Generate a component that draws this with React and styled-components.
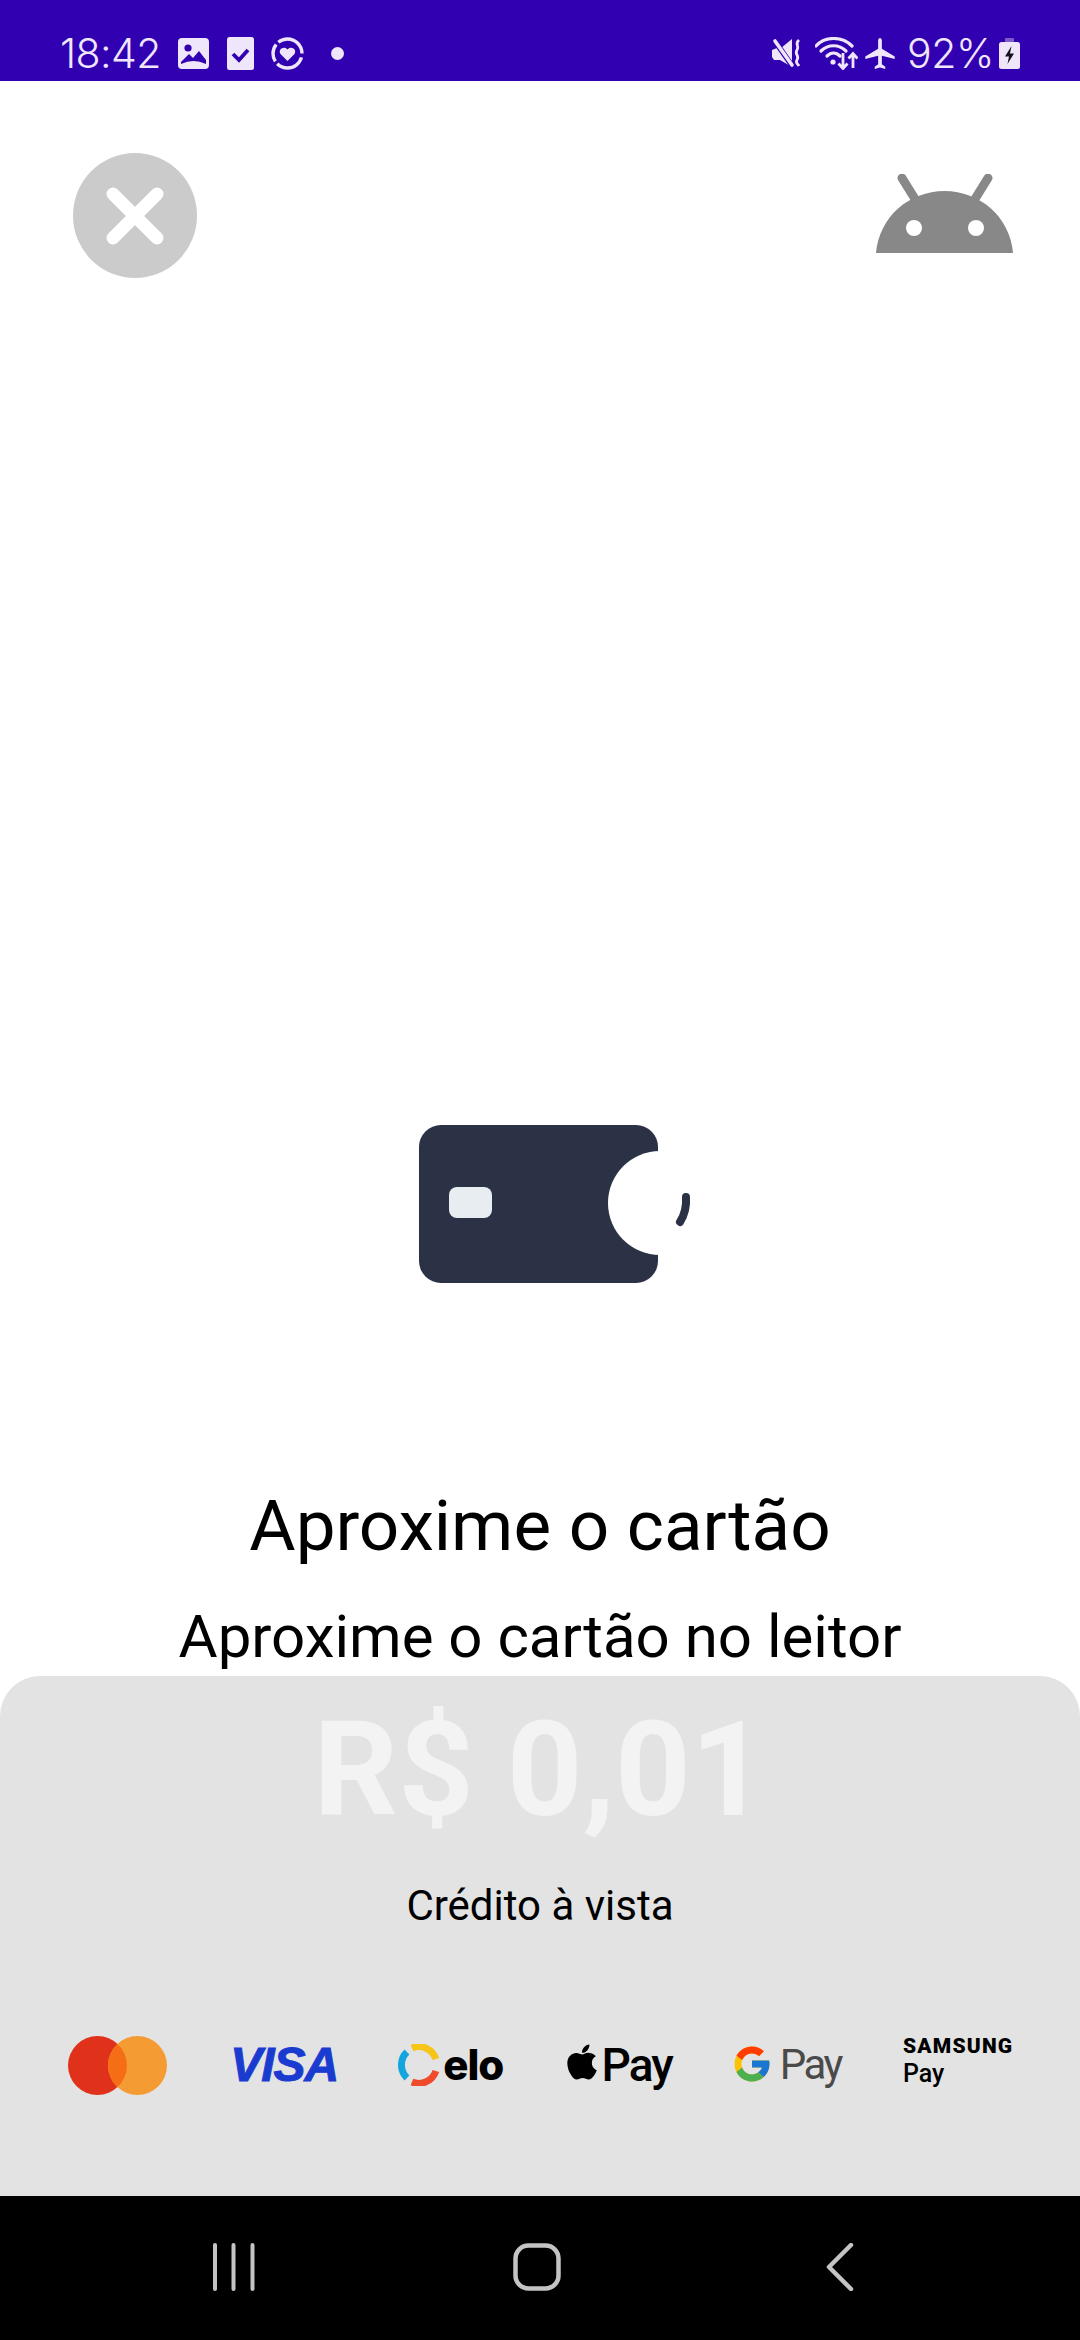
import React from "react";
import styled, { createGlobalStyle } from "styled-components";
import { FaApple } from "react-icons/fa";
import { FcGoogle } from "react-icons/fc";

const Global = createGlobalStyle`
  html, body { margin: 0; padding: 0; background: #fff; }
  * { box-sizing: border-box; }
  body { font-family: Roboto, "Liberation Sans", sans-serif; }
`;

const Page = styled.div`
  width: 1080px;
  height: 2340px;
  display: flex;
  flex-direction: column;
  overflow: hidden;
  background: #fff;
`;

const StatusBar = styled.div`
  height: 81px;
  flex: none;
  background: #3100b0;
  color: #efe6fb;
  display: flex;
  justify-content: space-between;
  align-items: flex-start;
  padding: 36px 60px 0 60px;
`;
const StatusGroup = styled.div`
  display: flex;
  align-items: center;
  height: 34px;
`;
const Clock = styled.span`
  font-family: Inter, Roboto, sans-serif;
  font-weight: 300;
  font-size: 41px;
  line-height: 34px;
  letter-spacing: -0.6px;
`;
const Percent = styled(Clock)`
  letter-spacing: -0.4px;
  margin: 0 5px 0 11px;
`;
const StatusIcon = styled.svg`
  display: block;
  flex: none;
  margin-left: ${(p) => p.$ml || 0}px;
`;

const Main = styled.main`
  flex: 1;
  display: flex;
  flex-direction: column;
  align-items: stretch;
`;
const Header = styled.header`
  display: flex;
  justify-content: space-between;
  align-items: flex-start;
  padding: 72px 67px 0 73px;
`;
const CloseButton = styled.button`
  width: 124px;
  height: 125px;
  border: 0;
  padding: 0;
  border-radius: 50%;
  background: #cbcbcb;
  display: flex;
  align-items: center;
  justify-content: center;
`;
const AndroidIcon = styled.svg`
  display: block;
  margin-top: 21px;
`;
const Illustration = styled.svg`
  display: block;
  align-self: center;
  margin-top: 846px;
`;
const Title = styled.h1`
  margin: 202px 0 0;
  text-align: center;
  font-weight: 400;
  font-size: 71px;
  line-height: 80px;
  color: #000;
`;
const Subtitle = styled.h2`
  margin: 37px 0 0;
  text-align: center;
  font-weight: 400;
  font-size: 60px;
  line-height: 68px;
  color: #000;
`;

const Panel = styled.section`
  height: 520px;
  flex: none;
  background: #e3e3e3;
  border-radius: 40px 40px 0 0;
  display: flex;
  flex-direction: column;
  align-items: center;
`;
const Amount = styled.div`
  margin-top: 17px;
  font-weight: 700;
  font-size: 132px;
  line-height: 155px;
  color: #f3f3f3;
`;
const Mode = styled.div`
  margin-top: 34px;
  font-size: 42px;
  line-height: 47px;
  color: #000;
`;
const Brands = styled.div`
  margin-top: 104px;
  width: 100%;
  display: flex;
  justify-content: space-between;
  align-items: center;
  padding: 0 71px 0 68px;
  height: 64px;
`;
const Logo = styled.div`
  width: ${(p) => p.$w}px;
  display: flex;
  align-items: center;
  flex: none;
`;
const VisaMark = styled.span`
  font-family: "Liberation Sans", sans-serif;
  font-style: italic;
  font-weight: 700;
  font-size: 48px;
  line-height: 48px;
  letter-spacing: -1px;
  color: #1a3bcf;
  -webkit-text-stroke: 1px #1a3bcf;
`;
const EloMark = styled.span`
  font-family: Inter, Roboto, sans-serif;
  font-weight: 800;
  font-size: 42px;
  line-height: 48px;
  letter-spacing: -1px;
  color: #000;
  margin-left: 3px;
`;
const PayMark = styled.span`
  font-weight: ${(p) => p.$weight || 500};
  font-size: ${(p) => p.$size || 46}px;
  line-height: 50px;
  letter-spacing: ${(p) => p.$spacing ?? -2}px;
  color: ${(p) => p.$color || "#000"};
  margin-left: ${(p) => p.$ml || 0}px;
`;
const AppleGlyph = styled(FaApple)`
  width: 30px;
  height: 40px;
  flex: none;
  color: #000;
  margin-top: -6px;
`;
const GoogleGlyph = styled(FcGoogle)`
  width: 42px;
  height: 42px;
  flex: none;
  margin: -2px 0 0 -4px;
`;
const SamsungStack = styled.div`
  width: 106px;
  flex: none;
  display: flex;
  flex-direction: column;
  align-items: flex-start;
  margin-top: -6px;
`;
const SamsungWord = styled.span`
  font-weight: 900;
  font-size: 21px;
  line-height: 22px;
  letter-spacing: 1.2px;
  white-space: nowrap;
  color: #000;
`;
const SamsungPay = styled.span`
  font-weight: 500;
  font-size: 25px;
  line-height: 30px;
  color: #000;
  margin-top: 2px;
`;

const NavBar = styled.nav`
  flex: none;
  height: 144px;
  background: #000;
  display: grid;
  grid-template-columns: repeat(3, 303px);
  justify-content: center;
  justify-items: center;
  align-items: start;
  padding: 47px 6px 0 0;
`;

const App = () => (
  <Page>
    <Global />
    <StatusBar>
      <StatusGroup>
        <Clock>18:42</Clock>
        <StatusIcon $ml={17} width="31" height="31" viewBox="0 0 31 31">
          <rect width="31" height="31" rx="4" fill="#efe6fb" />
          <circle cx="10" cy="10" r="3.6" fill="#3100b0" />
          <path d="M3 26 L3 24 L11 16 L15 20 L21 13 L28 22 L28 26 Q15.5 20 3 26Z" fill="#3100b0" />
        </StatusIcon>
        <StatusIcon $ml={18} width="27" height="33" viewBox="0 0 27 33">
          <rect width="27" height="33" rx="2.5" fill="#efe6fb" />
          <path d="M6 17 L12 23 L21 13" fill="none" stroke="#3100b0" strokeWidth="3.8" />
        </StatusIcon>
        <StatusIcon $ml={17} width="33" height="33" viewBox="0 0 33 33">
          <circle cx="16.5" cy="16.5" r="14.5" fill="none" stroke="#efe6fb" strokeWidth="3.4" strokeDasharray="30 3 18 3 37" strokeDashoffset="-4" />
          <path d="M16.5 24 L9.5 17 C6.5 12 13.5 8.5 16.5 12.5 C19.5 8.5 26.5 12 23.5 17Z" fill="#efe6fb" />
        </StatusIcon>
        <StatusIcon $ml={27} width="13" height="13" viewBox="0 0 13 13">
          <circle cx="6.5" cy="6.5" r="6.5" fill="#efe6fb" />
        </StatusIcon>
      </StatusGroup>
      <StatusGroup>
        <StatusIcon width="29" height="30" viewBox="0 0 29 30">
          <path d="M0 12 L5 10 H9 L20 1 V29 L8 22 H2 L0 19Z" fill="#efe6fb" />
          <path d="M0 -1 L21 29" stroke="#3100b0" strokeWidth="5.5" />
          <path d="M3 3 L20 27" stroke="#efe6fb" strokeWidth="3.6" strokeLinecap="round" />
          <path d="M27 2 C22 6 28 8 25 12 C22 16 28 18 25 22 C23 25 26 26 27 28" fill="none" stroke="#efe6fb" strokeWidth="2.8" />
        </StatusIcon>
        <StatusIcon $ml={14} width="43" height="33" viewBox="0 0 43 33">
          <path d="M1 9 C10 -1 27 -1 37 9" fill="none" stroke="#efe6fb" strokeWidth="3.2" strokeLinecap="round" />
          <path d="M6 14 C13 7 24 7 31 14" fill="none" stroke="#efe6fb" strokeWidth="3.2" strokeLinecap="round" />
          <path d="M12 19 C16 15 21 15 25 19" fill="none" stroke="#efe6fb" strokeWidth="3.2" strokeLinecap="round" />
          <circle cx="18" cy="25" r="2.6" fill="#efe6fb" />
          <path d="M28 16 V31 M23.5 26.5 L28 31.5 L32.5 26.5 M38 31 V17 M33.5 21.5 L38 16.5 L42.5 21.5" fill="none" stroke="#efe6fb" strokeWidth="2.8" />
        </StatusIcon>
        <StatusIcon $ml={6} width="32" height="31" viewBox="2 2 20 20">
          <path d="M21.5 15.5v-1.6L13.2 9V3.6c0-.9-.7-1.6-1.2-1.6s-1.2.7-1.2 1.6V9l-8.3 4.9v1.6l8.3-2V19l-2.2 1.5V22l3.4-.9 3.4.9v-1.5L13.2 19v-5.5z" fill="#efe6fb" />
        </StatusIcon>
        <Percent>92%</Percent>
        <StatusIcon width="21" height="31" viewBox="0 0 21 31">
          <rect x="6" y="0" width="9" height="5" rx="1" fill="#7b5cc8" />
          <rect x="0" y="4" width="21" height="27" rx="2.5" fill="#efe6fb" />
          <path d="M12.5 8 L6 18.5 H10 L8.5 26 L15 15.5 H11Z" fill="#15121f" />
        </StatusIcon>
      </StatusGroup>
    </StatusBar>

    <Main>
      <Header>
        <CloseButton aria-label="Fechar">
          <svg width="58" height="58" viewBox="0 0 58 58">
            <path d="M7 7 L51 51 M51 7 L7 51" stroke="#fff" strokeWidth="13" strokeLinecap="round" />
          </svg>
        </CloseButton>
        <AndroidIcon width="137" height="80" viewBox="0 0 137 80">
          <path d="M26 4 L39 25 M112 4 L99 25" stroke="#888" strokeWidth="9" strokeLinecap="round" />
          <path d="M0 79 C3 43 33 17 68.5 17 C104 17 134 43 137 79Z" fill="#888" />
          <circle cx="38" cy="54" r="8" fill="#fff" />
          <circle cx="100" cy="54" r="8" fill="#fff" />
        </AndroidIcon>
      </Header>

      <Illustration width="320" height="160" viewBox="380 1123 320 160">
        <rect x="419" y="1124" width="239" height="158" rx="22" fill="#2b3245" />
        <circle cx="660" cy="1202" r="52" fill="#fff" />
        <rect x="659" y="1140" width="40" height="124" fill="#fff" />
        <rect x="449" y="1186" width="43" height="31" rx="8" fill="#e8edf2" />
        <path d="M686 1196 Q687 1210 680 1221" fill="none" stroke="#2b3245" strokeWidth="8" strokeLinecap="round" />
      </Illustration>

      <Title>Aproxime o cartão</Title>
      <Subtitle>Aproxime o cartão no leitor</Subtitle>
    </Main>

    <Panel>
      <Amount>R$ 0,01</Amount>
      <Mode>Crédito à vista</Mode>
      <Brands>
        <Logo $w={99}>
          <svg width="99" height="59" viewBox="0 0 99 59">
            <circle cx="29.5" cy="29.5" r="29.5" fill="#e0321a" />
            <circle cx="69.5" cy="29.5" r="29.5" fill="#f49c33" />
            <path d="M49.5 7.9 A29.5 29.5 0 0 1 49.5 51.1 A29.5 29.5 0 0 1 49.5 7.9Z" fill="#f56d14" />
          </svg>
        </Logo>
        <Logo $w={105}>
          <VisaMark>VISA</VisaMark>
        </Logo>
        <Logo $w={105}>
          <svg width="42" height="42" viewBox="0 0 42 42">
            <path d="M9 8 A18 18 0 0 0 9 34" fill="none" stroke="#12a5de" strokeWidth="7" />
            <path d="M14 4 A18 18 0 0 1 38 15" fill="none" stroke="#f6c518" strokeWidth="7" />
            <path d="M38 27 A18 18 0 0 1 14 38" fill="none" stroke="#ee4a2b" strokeWidth="7" />
          </svg>
          <EloMark>elo</EloMark>
        </Logo>
        <Logo $w={105}>
          <AppleGlyph />
          <PayMark $ml={5}>Pay</PayMark>
        </Logo>
        <Logo $w={105}>
          <GoogleGlyph />
          <PayMark $weight={400} $color="#4a4a4a" $size={42} $spacing={-2.5} $ml={7}>Pay</PayMark>
        </Logo>
        <SamsungStack>
          <SamsungWord>SAMSUNG</SamsungWord>
          <SamsungPay>Pay</SamsungPay>
        </SamsungStack>
      </Brands>
    </Panel>

    <NavBar>
      <svg width="44" height="48" viewBox="0 0 44 48">
        <path d="M3 2 V46 M21.5 2 V46 M40.5 2 V46" stroke="#c4c4c4" strokeWidth="4" strokeLinecap="round" />
      </svg>
      <svg width="48" height="48" viewBox="0 0 48 48">
        <rect x="2.5" y="2.5" width="43" height="43" rx="13" fill="none" stroke="#c4c4c4" strokeWidth="4.5" />
      </svg>
      <svg width="28" height="48" viewBox="0 0 28 48">
        <path d="M25 2 L3 24 L25 46" fill="none" stroke="#c4c4c4" strokeWidth="4.5" strokeLinecap="round" strokeLinejoin="round" />
      </svg>
    </NavBar>
  </Page>
);

export default App;
